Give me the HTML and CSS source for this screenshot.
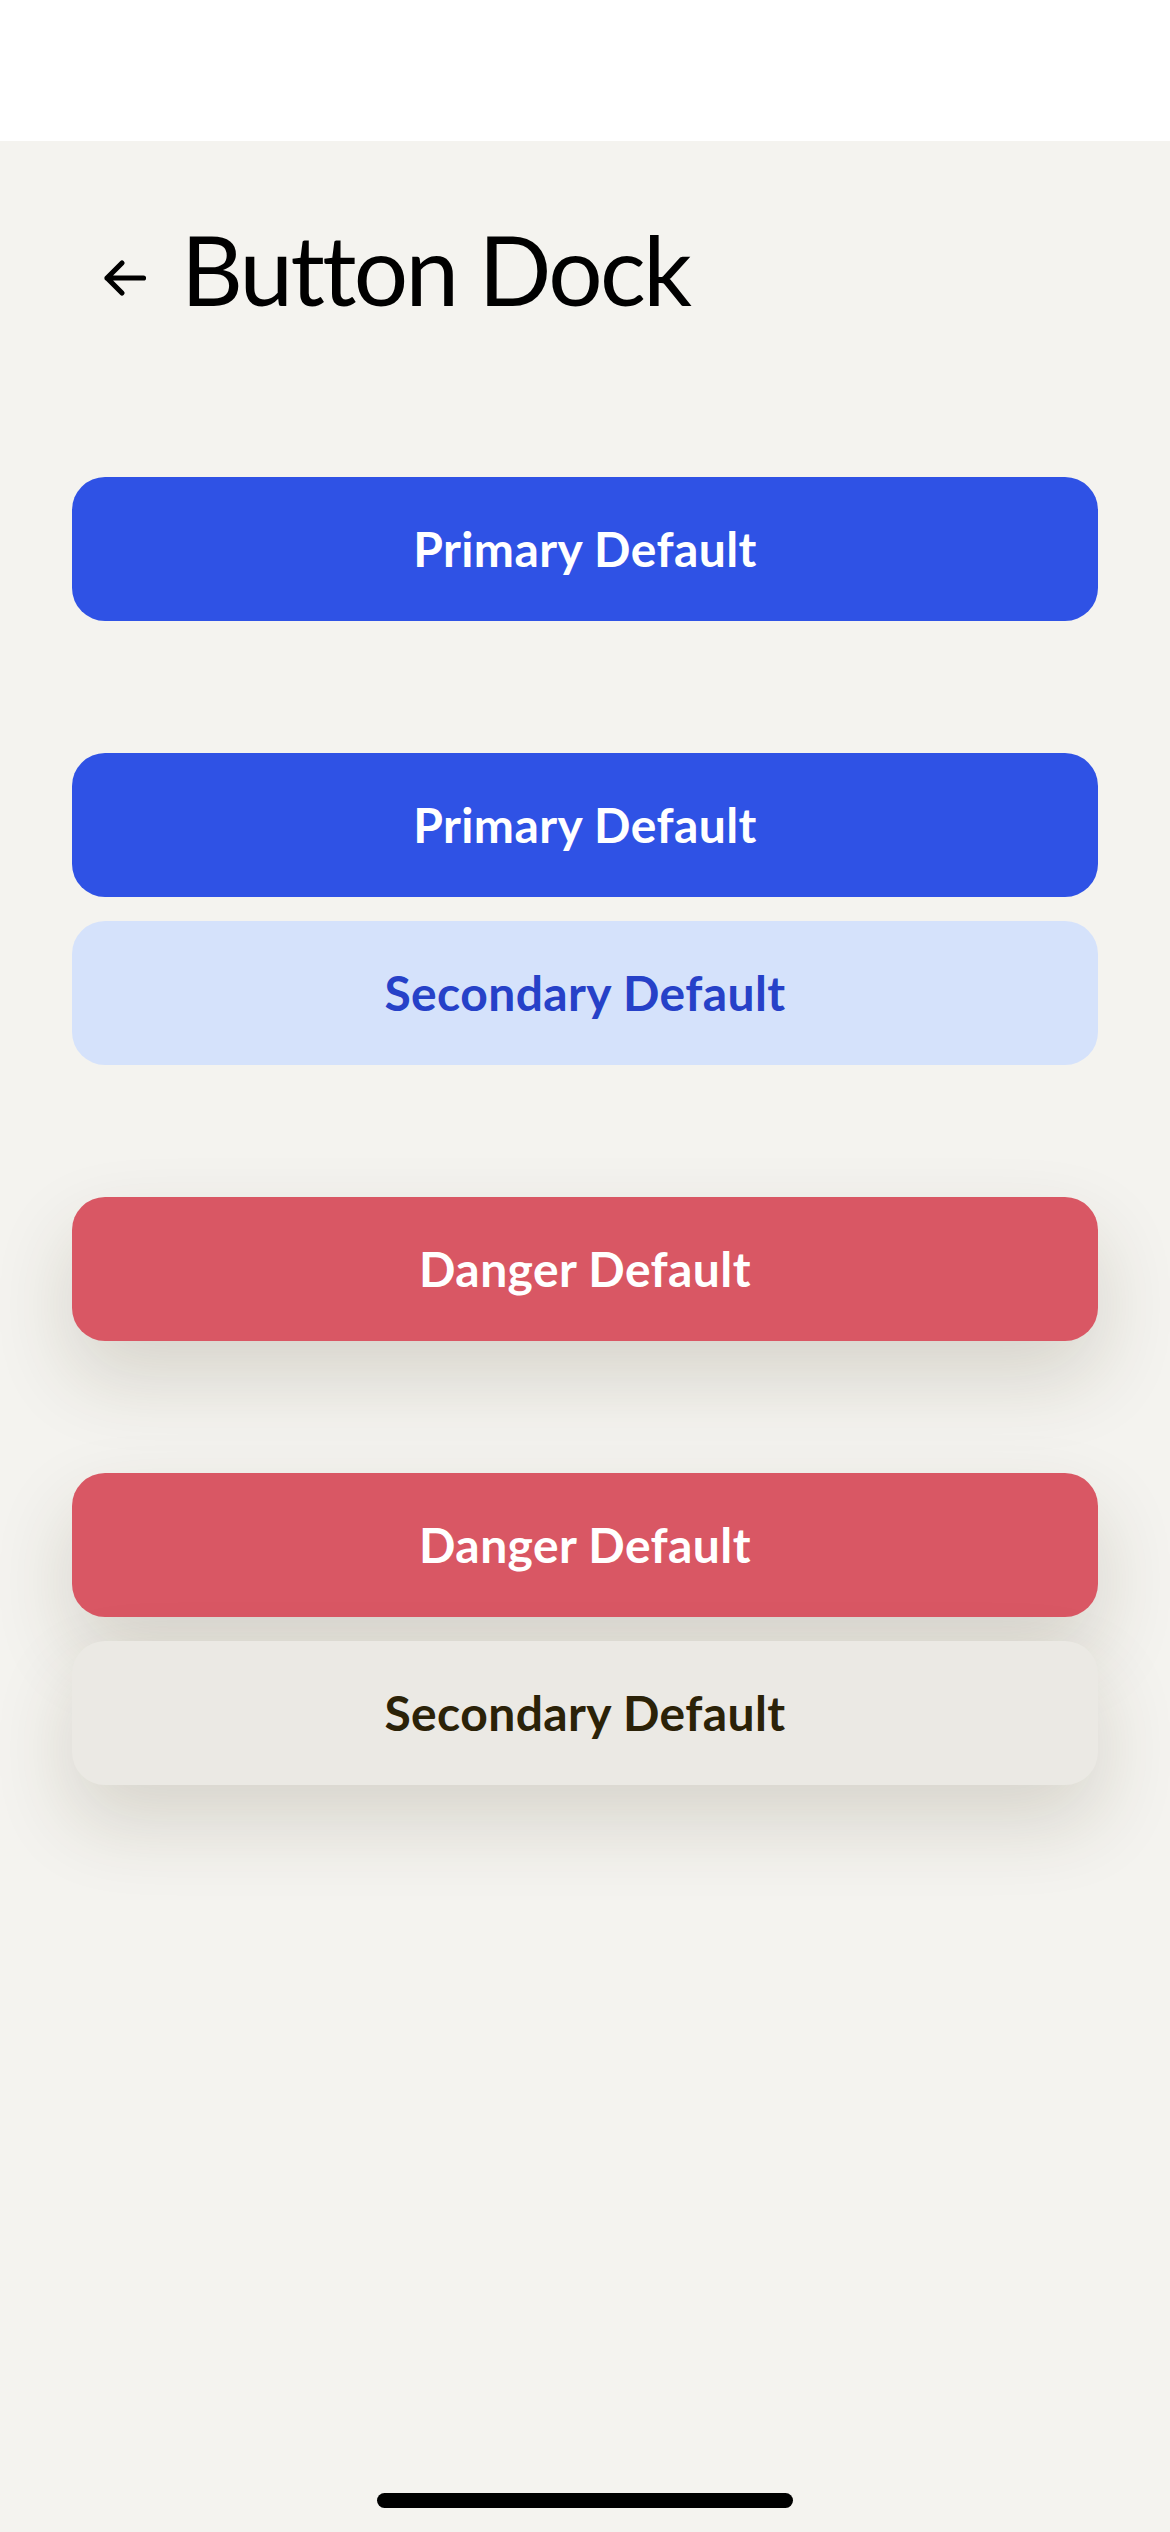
FILE: index.html
```html
<!DOCTYPE html>
<html lang="en">
<head>
<meta charset="utf-8">
<title>Button Dock</title>
<link rel="stylesheet" href="styles.css">
</head>
<body>
<div class="status-bar"></div>
<main class="screen">
  <header class="header">
    <svg class="back" width="48" height="48" viewBox="0 0 48 48" aria-hidden="true">
      <path d="M5 24 H41.5 M5 24 L20 9 M5 24 L20 39" fill="none" stroke="#000" stroke-width="5.2" stroke-linecap="round" stroke-linejoin="round"/>
    </svg>
    <h1 class="title">Button Dock</h1>
  </header>

  <section class="dock">
    <button class="btn btn-primary">Primary Default</button>
  </section>

  <section class="dock">
    <button class="btn btn-primary">Primary Default</button>
    <button class="btn btn-secondary">Secondary Default</button>
  </section>

  <section class="dock">
    <button class="btn btn-danger shadow">Danger Default</button>
  </section>

  <section class="dock">
    <button class="btn btn-danger shadow">Danger Default</button>
    <button class="btn btn-neutral shadow">Secondary Default</button>
  </section>
</main>
<div class="home-indicator"></div>
</body>
</html>
```

FILE: styles.css
```css
* { box-sizing: border-box; }

html, body {
  margin: 0;
  padding: 0;
}

body {
  width: 1170px;
  min-height: 2532px;
  background: #f4f3ef;
  font-family: "Lato", "Inter", "Liberation Sans", sans-serif;
  position: relative;
  overflow: hidden;
}

.status-bar {
  height: 141px;
  background: #ffffff;
}

.screen {
  padding: 0 72px;
}

.header {
  display: flex;
  align-items: center;
  margin-top: 80px;
  height: 96px;
  padding-left: 30px;
}

.back {
  flex: 0 0 auto;
  margin-top: 18px;
  margin-right: 31px;
}

.title {
  margin: 0;
  font-size: 96px;
  line-height: 96px;
  font-weight: 400;
  color: #000;
  letter-spacing: -2.6px;
}

.dock {
  display: flex;
  flex-direction: column;
  gap: 24px;
  margin-top: 132px;
}

.header + .dock {
  margin-top: 160px;
}

.btn {
  display: flex;
  align-items: center;
  justify-content: center;
  width: 100%;
  height: 144px;
  border: 0;
  border-radius: 33px;
  font-family: inherit;
  font-size: 48px;
  font-weight: 700;
  line-height: 48px;
  padding: 0 72px;
  letter-spacing: 0.4px;
}

.btn-primary {
  background: #2f52e5;
  color: #ffffff;
}

.btn-secondary {
  background: #d5e2fb;
  color: #2641c8;
}

.btn-danger {
  background: #d95764;
  color: #ffffff;
}

.btn-neutral {
  background: #ebe9e4;
  color: #2b2208;
}

.shadow {
  box-shadow: 0 36px 80px rgba(60, 50, 20, 0.16);
}

.home-indicator {
  position: absolute;
  left: 377px;
  bottom: 24px;
  width: 416px;
  height: 15px;
  border-radius: 8px;
  background: #000;
}
```
